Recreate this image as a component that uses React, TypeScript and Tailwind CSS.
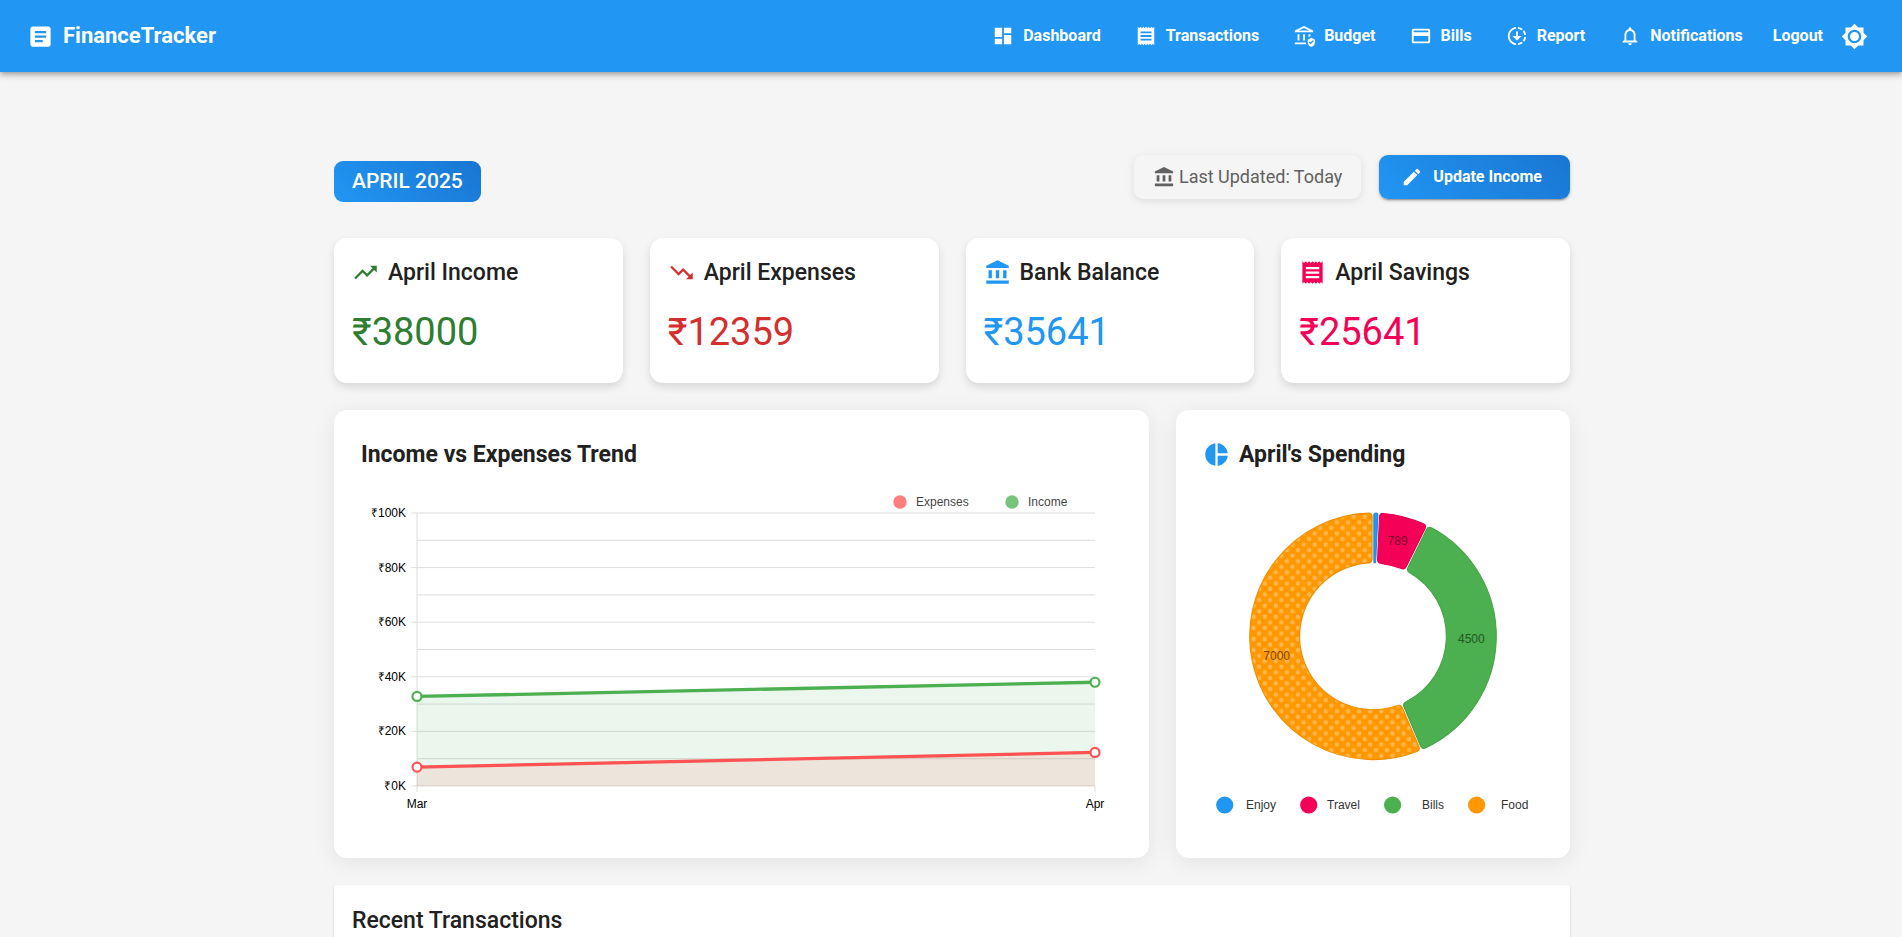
import type { ComponentType, ReactNode } from "react";
import {
  MdAccountBalance,
  MdArticle,
  MdBrightness7,
  MdDashboard,
  MdDownloading,
  MdEdit,
  MdNotificationsNone,
  MdOutlineAssuredWorkload,
  MdOutlinePayment,
  MdPieChart,
  MdTrendingDown,
  MdTrendingUp,
} from "react-icons/md";

type IconType = ComponentType<{ className?: string }>;

function ReceiptIcon({ className }: { className?: string }) {
  return (
    <svg viewBox="0 0 24 24" fill="currentColor" className={className} aria-hidden="true">
      <path d="M18 17H6v-2h12v2zm0-4H6v-2h12v2zm0-4H6V7h12v2zM3 22l1.5-1.5L6 22l1.5-1.5L9 22l1.5-1.5L12 22l1.5-1.5L15 22l1.5-1.5L18 22l1.5-1.5L21 22V2l-1.5 1.5L18 2l-1.5 1.5L15 2l-1.5 1.5L12 2l-1.5 1.5L9 2 7.5 3.5 6 2 4.5 3.5 3 2v20z" />
    </svg>
  );
}

const links: { label: string; icon: IconType }[] = [
  { label: "Dashboard", icon: MdDashboard },
  { label: "Transactions", icon: ReceiptIcon },
  { label: "Budget", icon: MdOutlineAssuredWorkload },
  { label: "Bills", icon: MdOutlinePayment },
  { label: "Report", icon: MdDownloading },
  { label: "Notifications", icon: MdNotificationsNone },
];

function Header() {
  return (
    <header className="relative flex h-18 items-center justify-between bg-[#2196f3] pl-[27px] pr-[34px] text-white shadow-[0px_2px_4px_-1px_rgba(0,0,0,0.2),0px_4px_5px_0px_rgba(0,0,0,0.14),0px_1px_10px_0px_rgba(0,0,0,0.12)]">
      <a href="#" className="flex items-center gap-[9px] text-[22px] font-bold leading-9">
        <MdArticle className="size-[27px]" />
        FinanceTracker
      </a>
      <nav className="flex items-center">
        <ul className="flex items-center gap-[34px]">
          {links.map(({ label, icon: Icon }) => (
            <li key={label}>
              <a href="#" className="flex items-center gap-[9px] text-base font-bold">
                <Icon className="size-[22px]" />
                {label}
              </a>
            </li>
          ))}
        </ul>
        <button type="button" className="ml-[30px] text-base font-bold">
          Logout
        </button>
        <button type="button" aria-label="Toggle theme" className="ml-[18px]">
          <MdBrightness7 className="size-[27px]" />
        </button>
      </nav>
    </header>
  );
}

const stats: { title: string; amount: string; color: string; icon: IconType }[] = [
  { title: "April Income", amount: "₹38000", color: "text-[#2e7d32]", icon: MdTrendingUp },
  { title: "April Expenses", amount: "₹12359", color: "text-[#d32f2f]", icon: MdTrendingDown },
  { title: "Bank Balance", amount: "₹35641", color: "text-[#2196f3]", icon: MdAccountBalance },
  { title: "April Savings", amount: "₹25641", color: "text-[#f50057]", icon: ReceiptIcon },
];

const PLOT = { left: 56, right: 734, top: 33, bottom: 306 };
const yFor = (k: number) => PLOT.bottom - ((PLOT.bottom - PLOT.top) * k) / 100;

const series = [
  { name: "Income", color: "#4caf50", from: 32.8, to: 38 },
  { name: "Expenses", color: "#ff5252", from: 6.9, to: 12.3 },
];

function TrendChart() {
  const { left, right, bottom, top } = PLOT;
  return (
    <svg
      viewBox="0 0 761 351"
      className="block w-full font-['Liberation_Sans',Arial,sans-serif] text-xs"
      role="img"
      aria-label="Income vs Expenses Trend"
    >
      <g stroke="#dddddd" strokeWidth="1">
        {Array.from({ length: 11 }, (_, i) => (
          <line key={i} x1={i % 2 ? left : left - 6} x2={right} y1={yFor(i * 10)} y2={yFor(i * 10)} />
        ))}
        <line x1={left} x2={left} y1={top} y2={bottom + 6} />
        <line x1={right} x2={right} y1={bottom} y2={bottom + 6} />
      </g>
      {[100, 80, 60, 40, 20, 0].map((v) => (
        <text key={v} x={left - 11} y={yFor(v) + 4} textAnchor="end" fill="#000">
          ₹{v}K
        </text>
      ))}
      <text x={left} y={bottom + 22} textAnchor="middle" fill="#000">
        Mar
      </text>
      <text x={right} y={bottom + 22} textAnchor="middle" fill="#000">
        Apr
      </text>
      {series.map((s) => (
        <polygon
          key={s.name}
          fill={s.color}
          fillOpacity="0.11"
          points={`${left},${yFor(s.from)} ${right},${yFor(s.to)} ${right},${bottom} ${left},${bottom}`}
        />
      ))}
      {series.map((s) => (
        <g key={s.name} stroke={s.color}>
          <line x1={left} y1={yFor(s.from)} x2={right} y2={yFor(s.to)} strokeWidth="3.3" />
          <circle cx={left} cy={yFor(s.from)} r="4.5" fill="#fff" strokeWidth="2.2" />
          <circle cx={right} cy={yFor(s.to)} r="4.5" fill="#fff" strokeWidth="2.2" />
        </g>
      ))}
      <g opacity="0.75">
        <circle cx="539" cy="22" r="6.7" fill="#ff5252" />
        <text x="555" y="26">
          Expenses
        </text>
        <circle cx="651" cy="22" r="6.7" fill="#4caf50" />
        <text x="667" y="26">
          Income
        </text>
      </g>
    </svg>
  );
}

const OUTER = 123.3;
const INNER = 73.4;
const PAD = (0.7 * Math.PI) / 180;

const spending = [
  { name: "Enjoy", value: 70, color: "#2196f3", fill: "#2196f3", stroke: "#1f8ce3", label: "", legendX: 21.7, textX: 43 },
  { name: "Travel", value: 789, color: "#f50057", fill: "#f50057", stroke: "#e40051", label: "#78002b", legendX: 105.7, textX: 124 },
  { name: "Bills", value: 4500, color: "#4caf50", fill: "#4caf50", stroke: "#47a34a", label: "#255627", legendX: 189.6, textX: 219 },
  { name: "Food", value: 7000, color: "#ff9800", fill: "url(#dots)", stroke: "#ed8e00", label: "#7d4a00", legendX: 273.6, textX: 298 },
];

function point(r: number, a: number) {
  return `${(r * Math.sin(a)).toFixed(2)} ${(-r * Math.cos(a)).toFixed(2)}`;
}

function slicePath(start: number, end: number) {
  const shift = Math.sqrt(OUTER ** 2 + INNER ** 2) * Math.sin(PAD / 2);
  const o0 = start + shift / OUTER;
  const o1 = end - shift / OUTER;
  const i0 = start + shift / INNER;
  const i1 = end - shift / INNER;
  const co = Math.min(3.6, ((o1 - o0) * OUTER) / 2);
  const ci = Math.min(3.6, ((i1 - i0) * INNER) / 2);
  const large = end - start > Math.PI ? 1 : 0;
  return [
    `M${point(OUTER - co, o0)}`,
    `A${co} ${co} 0 0 1 ${point(OUTER, o0 + co / OUTER)}`,
    `A${OUTER} ${OUTER} 0 ${large} 1 ${point(OUTER, o1 - co / OUTER)}`,
    `A${co} ${co} 0 0 1 ${point(OUTER - co, o1)}`,
    `L${point(INNER + ci, i1)}`,
    `A${ci} ${ci} 0 0 1 ${point(INNER, i1 - ci / INNER)}`,
    `A${INNER} ${INNER} 0 ${large} 0 ${point(INNER, i0 + ci / INNER)}`,
    `A${ci} ${ci} 0 0 1 ${point(INNER + ci, i0)}`,
    "Z",
  ].join("");
}

function SpendingChart() {
  const total = spending.reduce((sum, s) => sum + s.value, 0);
  const scale = (2 * Math.PI - spending.length * PAD) / total;
  let angle = 0;
  const slices = spending.map((s) => {
    const start = angle;
    angle += s.value * scale + PAD;
    return { ...s, start, end: angle };
  });
  const mid = (OUTER + INNER) / 2;
  return (
    <svg
      viewBox="0 0 340 351"
      className="block w-full font-['Liberation_Sans',Arial,sans-serif] text-xs"
      role="img"
      aria-label="April's Spending"
    >
      <defs>
        <pattern id="dots" width="11.11" height="11.11" patternUnits="userSpaceOnUse">
          <rect width="11.11" height="11.11" fill="#ff9800" />
          <circle cx="2.78" cy="2.78" r="2.22" fill="#fff" fillOpacity="0.3" />
          <circle cx="8.33" cy="8.33" r="2.22" fill="#fff" fillOpacity="0.3" />
        </pattern>
      </defs>
      <g transform="translate(170 156.3)">
        {slices.map((s) => (
          <path key={s.name} d={slicePath(s.start, s.end)} fill={s.fill} stroke={s.stroke} strokeWidth="1.1" />
        ))}
        {slices
          .filter((s) => s.label)
          .map((s) => {
            const a = (s.start + s.end) / 2;
            return (
              <text key={s.name} x={mid * Math.sin(a)} y={4 - mid * Math.cos(a)} textAnchor="middle" fill={s.label}>
                {s.value}
              </text>
            );
          })}
      </g>
      {spending.map((s) => (
        <g key={s.name}>
          <circle cx={s.legendX} cy="325" r="8.6" fill={s.color} />
          <text x={s.textX} y="329" fill="#333">
            {s.name}
          </text>
        </g>
      ))}
    </svg>
  );
}

function ChartCard({ className, title, children }: { className: string; title: ReactNode; children: ReactNode }) {
  return (
    <section className={`rounded-[13px] bg-white p-[27px] shadow-[0px_4px_22px_rgba(0,0,0,0.08)] ${className}`}>
      <h2 className="mb-2 flex items-center gap-[9px] text-[23px] font-bold leading-[35px]">{title}</h2>
      {children}
    </section>
  );
}

export default function App() {
  return (
    <div className="min-h-screen bg-[#f5f5f5] font-[Roboto,'Noto_Sans',sans-serif] text-[#212121]">
      <Header />
      <main className="mx-auto max-w-[1238px] pl-0.5 pt-[83px]">
        <div className="flex items-start justify-between">
          <h1 className="mt-1.5 rounded-[9px] bg-[linear-gradient(45deg,#2196f3,#1976d2)] px-[18px] py-1 text-[21px] font-medium leading-[33px] text-white">
            APRIL 2025
          </h1>
          <div className="flex gap-[18px]">
            <div className="flex h-11 items-center gap-1 rounded-[9px] px-[19px] text-lg text-[#616161] shadow-[0px_2px_9px_rgba(0,0,0,0.1)]">
              <MdAccountBalance className="size-[22px]" />
              Last Updated: Today
            </div>
            <button
              type="button"
              className="flex h-11 items-center gap-[10px] rounded-[9px] bg-[linear-gradient(45deg,#2196f3,#1976d2)] pl-[22px] pr-[28px] text-base font-bold text-white shadow-[0px_3px_1px_-2px_rgba(0,0,0,0.2),0px_2px_2px_0px_rgba(0,0,0,0.14),0px_1px_5px_0px_rgba(0,0,0,0.12)]"
            >
              <MdEdit className="size-[22px]" />
              Update Income
            </button>
          </div>
        </div>

        <div className="mt-9 grid grid-cols-12 gap-[27px]">
          {stats.map(({ title, amount, color, icon: Icon }) => (
            <section
              key={title}
              className="col-span-3 rounded-[13px] bg-white px-[18px] pb-[27px] pt-[17px] shadow-[0px_4px_9px_rgba(0,0,0,0.12)]"
            >
              <h2 className="flex items-center gap-[9px] text-[23px] font-medium leading-[35px]">
                <Icon className={`size-[27px] ${color}`} />
                {title}
              </h2>
              <p className={`mt-[19px] text-[38px] leading-[47px] ${color}`}>{amount}</p>
            </section>
          ))}

          <ChartCard className="col-span-8" title="Income vs Expenses Trend">
            <TrendChart />
          </ChartCard>
          <ChartCard
            className="col-span-4"
            title={
              <>
                <MdPieChart className="size-[27px] text-[#2196f3]" />
                April's Spending
              </>
            }
          >
            <SpendingChart />
          </ChartCard>

          <section className="col-span-12 rounded-sm bg-white p-[18px] shadow-[0px_2px_1px_-1px_rgba(0,0,0,0.2),0px_1px_1px_0px_rgba(0,0,0,0.14),0px_1px_3px_0px_rgba(0,0,0,0.12)]">
            <h2 className="text-[23px] font-medium leading-[35px]">Recent Transactions</h2>
          </section>
        </div>
      </main>
    </div>
  );
}
